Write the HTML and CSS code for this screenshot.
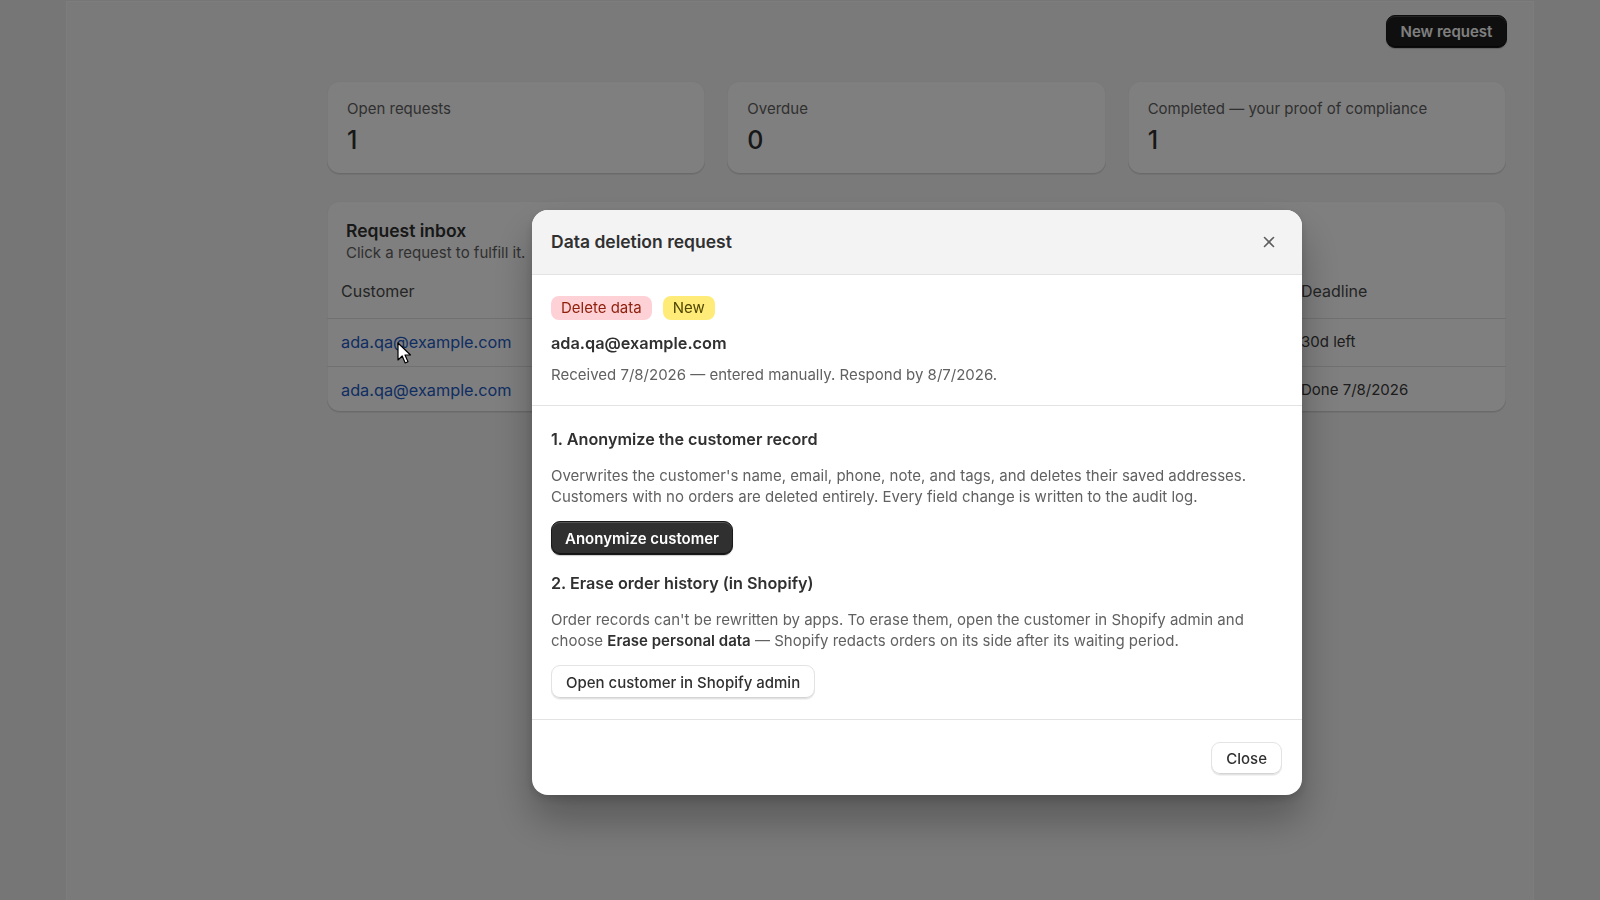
FILE: index.html
```html
<!DOCTYPE html>
<html lang="en">
<head>
<meta charset="utf-8">
<title>Data requests</title>
<link rel="stylesheet" href="styles.css">
</head>
<body>
<div class="frame">
  <div class="layout">
    <aside class="side"></aside>
    <main class="main">
      <div class="topbar">
        <button class="btn btn-primary">New request</button>
      </div>
      <div class="stats">
        <div class="card stat">
          <div class="stat-label">Open requests</div>
          <div class="stat-value">1</div>
        </div>
        <div class="card stat">
          <div class="stat-label">Overdue</div>
          <div class="stat-value">0</div>
        </div>
        <div class="card stat">
          <div class="stat-label">Completed — your proof of compliance</div>
          <div class="stat-value">1</div>
        </div>
      </div>
      <section class="card inbox">
        <div class="inbox-head">
          <h2 class="inbox-title">Request inbox</h2>
          <p class="inbox-sub">Click a request to fulfill it.</p>
        </div>
        <table class="table">
          <colgroup>
            <col class="c-cust"><col class="c-mid"><col class="c-dead">
          </colgroup>
          <thead>
            <tr><th>Customer</th><th></th><th>Deadline</th></tr>
          </thead>
          <tbody>
            <tr><td><a class="link" href="#">ada.qa@example.com</a></td><td></td><td class="dead">30d left</td></tr>
            <tr><td><a class="link" href="#">ada.qa@example.com</a></td><td></td><td class="dead">Done 7/8/2026</td></tr>
          </tbody>
        </table>
      </section>
    </main>
  </div>
</div>

<div class="overlay"></div>

<div class="modal" role="dialog">
  <div class="modal-head">
    <h2 class="modal-title">Data deletion request</h2>
    <button class="icon-btn" aria-label="Close">
      <svg width="12" height="12" viewBox="0 0 12 12"><path d="M1.5 1.5 L10.5 10.5 M10.5 1.5 L1.5 10.5" stroke="#5e5e5e" stroke-width="1.6" stroke-linecap="round" fill="none"/></svg>
    </button>
  </div>
  <div class="modal-sec sec-info">
    <div class="badges">
      <span class="badge badge-red">Delete data</span>
      <span class="badge badge-yellow">New</span>
    </div>
    <div class="m-email">ada.qa@example.com</div>
    <div class="m-meta">Received 7/8/2026 — entered manually. Respond by 8/7/2026.</div>
  </div>
  <div class="modal-sec sec-steps">
    <h3 class="step-title">1. Anonymize the customer record</h3>
    <p class="step-text"><span>Overwrites the customer's name, email, phone, note, and tags, and deletes their saved addresses.</span><br><span>Customers with no orders are deleted entirely. Every field change is written to the audit log.</span></p>
    <button class="btn btn-primary btn-step">Anonymize customer</button>
    <h3 class="step-title step-gap">2. Erase order history (in Shopify)</h3>
    <p class="step-text"><span>Order records can't be rewritten by apps. To erase them, open the customer in Shopify admin and</span><br><span>choose </span><strong>Erase personal data</strong><span> — Shopify redacts orders on its side after its waiting period.</span></p>
    <button class="btn btn-secondary btn-step">Open customer in Shopify admin</button>
  </div>
  <div class="modal-foot">
    <button class="btn btn-secondary">Close</button>
  </div>
</div>

<svg class="cursor" width="16" height="24" viewBox="0 0 16 24">
  <path d="M1 1 L1 18 L5.2 14 L8.2 21 L11 19.8 L8 13 L13.5 13 Z" fill="#ffffff" stroke="#000000" stroke-width="1.2" stroke-linejoin="round"/>
</svg>
</body>
</html>
```

FILE: styles.css
```css
* { box-sizing: border-box; }

html, body {
  margin: 0;
  padding: 0;
  height: 100%;
}

body {
  background: #ededed;
  font-family: Inter, "Noto Sans", "Liberation Sans", sans-serif;
  color: #303030;
  overflow: hidden;
}

.frame {
  margin: 1px 0 0 66px;
  width: 1468px;
  height: 899px;
  background: #f4f4f4;
  border-top: 1px solid #fbfbfb;
  border-left: 1px solid #fbfbfb;
  border-right: 1px solid #fbfbfb;
}

.layout {
  display: grid;
  grid-template-columns: 260px 1fr;
}

.main {
  padding: 13px 27px 0 0;
}

.topbar {
  display: flex;
  justify-content: flex-end;
  margin-right: -1px;
}

.btn {
  font-family: inherit;
  font-size: 15px;
  height: 34px;
  padding: 0 14px;
  border-radius: 9px;
  cursor: pointer;
  white-space: nowrap;
}

.btn-primary {
  background: #303030;
  color: #ffffff;
  font-weight: 600;
  border: 1px solid #1a1a1a;
  box-shadow: inset 0 1px 0 rgba(255,255,255,0.18), inset 0 -1px 0 rgba(0,0,0,0.6), 0 1px 1px rgba(0,0,0,0.2);
}

.topbar .btn-primary {
  height: 33px;
  width: 121px;
  padding: 0;
  background: #1f1f1f;
}

.btn-secondary {
  background: #ffffff;
  color: #303030;
  font-weight: 500;
  border: 1px solid #e3e3e3;
  box-shadow: inset 0 -1px 0 #d4d4d4, 0 1px 0 rgba(0,0,0,0.05);
}

.stats {
  margin-top: 33px;
  display: grid;
  grid-template-columns: repeat(3, 1fr);
  gap: 22px;
}

.card {
  background: #ffffff;
  border-radius: 13px;
  box-shadow: 0 1px 0 rgba(26,26,26,0.07), inset 0 -1px 0 rgba(0,0,0,0.12), inset 0 0 0 1px rgba(0,0,0,0.05);
}

.stat {
  height: 93px;
  padding: 18px 20px 16px;
}

.stat-label {
  font-size: 15px;
  line-height: 20px;
  color: #616161;
}

.stat-value {
  margin-top: 5px;
  font-size: 25px;
  line-height: 32px;
  font-weight: 500;
  color: #303030;
}

.inbox {
  margin-top: 27px;
  padding-top: 18px;
  overflow: hidden;
}

.inbox-head {
  padding: 0 20px 0 19px;
}

.inbox-title {
  margin: 0;
  font-size: 17.5px;
  line-height: 24px;
  font-weight: 600;
}

.inbox-sub {
  margin: 0;
  font-size: 15px;
  line-height: 20px;
  color: #616161;
}

.table {
  margin-top: 6px;
  width: 100%;
  border-collapse: collapse;
  table-layout: fixed;
  font-size: 16px;
}

.c-cust { width: 220px; }
.c-dead { width: 219px; }

.table th {
  text-align: left;
  font-weight: 400;
  color: #4a4a4a;
  padding: 10px 14px 15px;
  line-height: 24px;
  border-bottom: 1px solid #e3e3e3;
}

.table td {
  padding: 13px 14px 14px;
  line-height: 20px;
  color: #303030;
  white-space: nowrap;
}

.table td.dead {
  font-size: 15px;
  color: #3a3a3a;
}

.table tbody tr + tr td {
  border-top: 1px solid #e3e3e3;
  padding-top: 13px;
  padding-bottom: 12px;
}

.link {
  color: #1e5bc6;
  text-decoration: none;
  font-size: 16.3px;
}

.overlay {
  position: fixed;
  inset: 0;
  background: rgba(0,0,0,0.5);
}

.modal {
  position: fixed;
  left: 532px;
  top: 210px;
  width: 770px;
  background: #ffffff;
  border-radius: 16px;
  overflow: hidden;
  box-shadow: 0 24px 40px rgba(0,0,0,0.28), 0 4px 10px rgba(0,0,0,0.15);
}

.modal-head {
  height: 65px;
  background: #f3f3f3;
  border-bottom: 1px solid #e3e3e3;
  display: flex;
  align-items: center;
  justify-content: space-between;
  padding: 0 19px 0 19px;
}

.modal-title {
  margin: 0;
  font-size: 17.5px;
  line-height: 24px;
  font-weight: 600;
  color: #303030;
}

.icon-btn {
  width: 28px;
  height: 28px;
  border: 0;
  background: transparent;
  display: flex;
  align-items: center;
  justify-content: center;
  padding: 0;
  cursor: pointer;
}

.modal-sec {
  border-bottom: 1px solid #e3e3e3;
  padding: 0 20px 0 19px;
}

.sec-info {
  padding-top: 21px;
  padding-bottom: 20px;
}

.badges {
  display: flex;
  gap: 11px;
}

.badge {
  height: 24px;
  line-height: 24px;
  padding: 0 10px;
  border-radius: 8px;
  font-size: 15px;
}

.badge-red {
  background: #fed1d7;
  color: #8e1f0b;
}

.badge-yellow {
  background: #ffeb78;
  color: #4f4700;
}

.m-email {
  margin-top: 11px;
  font-size: 16.3px;
  line-height: 24px;
  font-weight: 600;
  color: #303030;
}

.m-meta {
  margin-top: 10px;
  font-size: 15px;
  line-height: 20px;
  color: #616161;
}

.sec-steps {
  padding-top: 21px;
  padding-bottom: 20px;
}

.step-title {
  margin: 0;
  font-size: 16.2px;
  line-height: 24px;
  font-weight: 600;
  color: #303030;
}

.step-gap {
  margin-top: 16px;
}

.step-text {
  margin: 15px 0 0;
  font-size: 15px;
  line-height: 20.5px;
  color: #616161;
}

.step-text strong {
  font-weight: 600;
  color: #303030;
}

.btn-step {
  display: block;
  margin-top: 14px;
}

.btn-primary.btn-step {
  padding: 0 13px;
}

.modal-foot {
  display: flex;
  justify-content: flex-end;
  padding: 22px 20px 20px;
}

.modal-foot .btn {
  height: 33px;
}

.cursor {
  position: fixed;
  left: 397px;
  top: 342px;
}
```
